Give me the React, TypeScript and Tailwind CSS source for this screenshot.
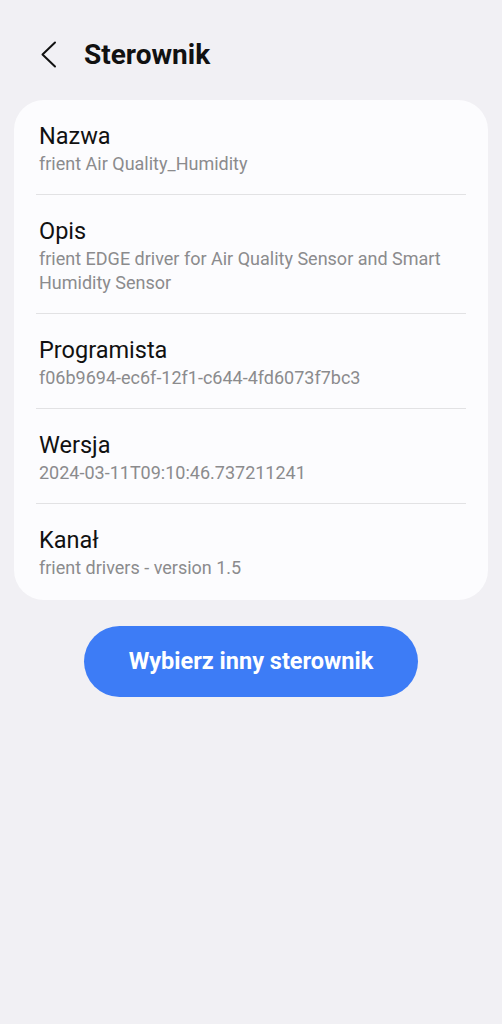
const rows = [
  { title: "Nazwa", value: "frient Air Quality_Humidity" },
  { title: "Opis", value: "frient EDGE driver for Air Quality Sensor and Smart Humidity Sensor" },
  { title: "Programista", value: "f06b9694-ec6f-12f1-c644-4fd6073f7bc3" },
  { title: "Wersja", value: "2024-03-11T09:10:46.737211241" },
  { title: "Kanał", value: "frient drivers - version 1.5" },
];

export default function App() {
  return (
    <div className="min-h-[1024px] w-full bg-[#f1f0f4] font-['Roboto',sans-serif]">
      <header className="flex items-center h-[100px] pt-[10px] px-[40px]">
        <svg width="18" height="28" viewBox="0 0 18 28" className="shrink-0">
          <path d="M15 1.5 L2.5 13.5 L15 25.5" fill="none" stroke="#111" strokeWidth="2" strokeLinecap="round" strokeLinejoin="round" />
        </svg>
        <h1 className="ml-[26px] text-[28px] font-bold text-[#111] leading-none">Sterownik</h1>
      </header>

      <div className="mx-[14px] rounded-[30px] bg-[#fcfcfe] px-[22px] pb-[2px]">
        {rows.map((r, i) => (
          <div key={r.title} className={i < rows.length - 1 ? "border-b border-[#e2e2e4]" : ""}>
            <div className="px-[3px] pt-[21px] pb-[18px]">
              <div className="text-[23.5px] leading-[30px] text-[#111]">{r.title}</div>
              <div className="text-[18px] leading-[24px] mt-[1px] text-[#8b8b8d]">{r.value}</div>
            </div>
          </div>
        ))}
      </div>

      <div className="flex justify-center mt-[26px]">
        <button className="w-[334px] h-[71px] rounded-full bg-[#3d7cf6] text-white text-[23.5px] font-bold">
          Wybierz inny sterownik
        </button>
      </div>
    </div>
  );
}
